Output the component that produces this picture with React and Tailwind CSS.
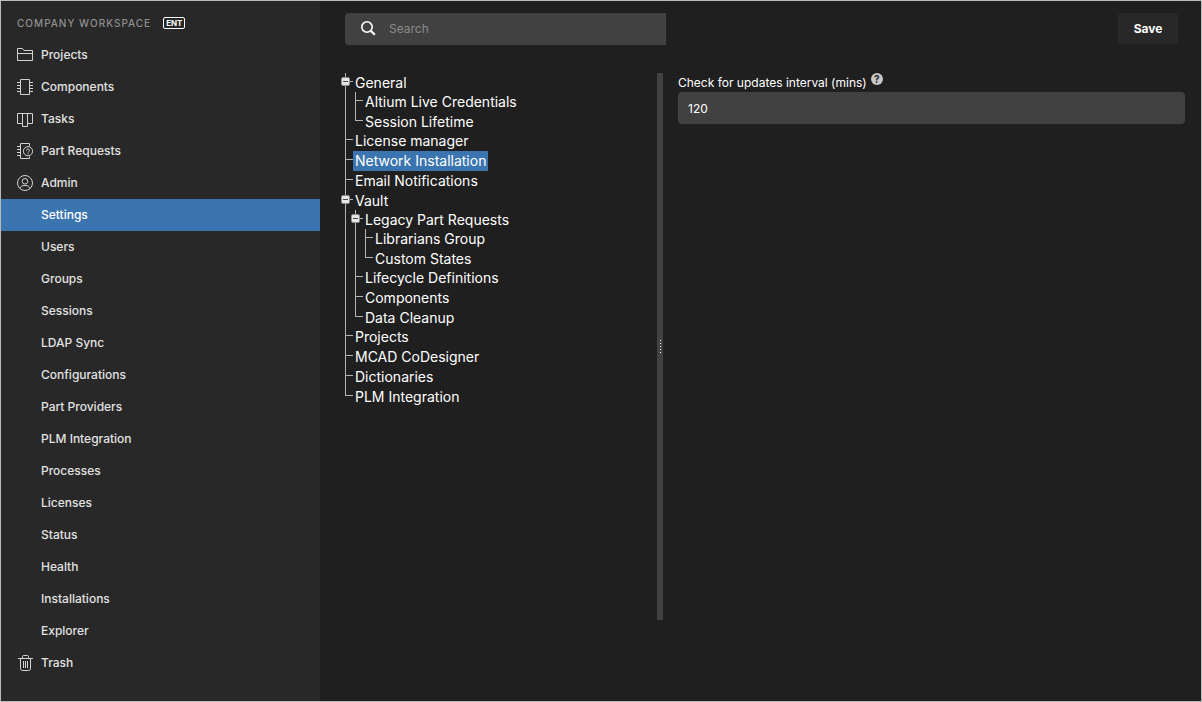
import { useState } from "react";

const adminPages = [
  "Settings",
  "Users",
  "Groups",
  "Sessions",
  "LDAP Sync",
  "Configurations",
  "Part Providers",
  "PLM Integration",
  "Processes",
  "Licenses",
  "Status",
  "Health",
  "Installations",
  "Explorer",
];

const settingsTree = [
  {
    label: "General",
    children: [{ label: "Altium Live Credentials" }, { label: "Session Lifetime" }],
  },
  { label: "License manager" },
  { label: "Network Installation" },
  { label: "Email Notifications" },
  {
    label: "Vault",
    children: [
      {
        label: "Legacy Part Requests",
        children: [{ label: "Librarians Group" }, { label: "Custom States" }],
      },
      { label: "Lifecycle Definitions" },
      { label: "Components" },
      { label: "Data Cleanup" },
    ],
  },
  { label: "Projects" },
  { label: "MCAD CoDesigner" },
  { label: "Dictionaries" },
  { label: "PLM Integration" },
];

function Icon({ children }) {
  return (
    <svg viewBox="0 0 16 16" className="size-4 shrink-0" fill="none" stroke="#d2d2d2" aria-hidden="true">
      {children}
    </svg>
  );
}

const FolderIcon = () => (
  <Icon>
    <path d="M.5 13.500v-12h5l1.500 2h8.500v10zM.5 6.500h15" />
  </Icon>
);

const ChipIcon = () => (
  <Icon>
    <path d="M3.500.5h9v15h-9zM0 3.500h3M0 6.500h3M0 9.500h3M0 12.500h3M13 3.500h3M13 6.500h3M13 9.500h3M13 12.500h3" />
  </Icon>
);

const BoardIcon = () => (
  <Icon>
    <path d="M.5 2.500h15v10h-5v3h-5v-3h-5zM5.500 2.500v10M10.500 2.500v10" />
  </Icon>
);

const PartRequestIcon = () => (
  <Icon>
    <path d="M12.500 3v-2.500h-9v15h9v-2M0 3.500h3M0 6.500h3M0 9.500h3M0 12.500h3" />
    <circle cx="11" cy="8.200" r="4.600" />
    <path d="M9.500 7.500c0-2 3-2 3 0 0 1-1.500 1-1.500 2M11 10.300v1" />
  </Icon>
);

const UserIcon = () => (
  <Icon>
    <circle cx="8" cy="8" r="7.500" />
    <circle cx="8" cy="6.300" r="2.800" />
    <path d="M3 13.500c.5-2.200 2-3 5-3s4.500.8 5 3" />
  </Icon>
);

const TrashIcon = () => (
  <Icon>
    <path d="M1 3.500h15M5.500 3V1.500q0-1 1-1h4q1 0 1 1V3M3.500 4v9.500q0 2 2 2h6q2 0 2-2V4M6.500 6v7M8.500 6v7M10.500 6v7" />
  </Icon>
);

function NavItem({ label, icon, active, onClick }) {
  return (
    <li>
      <a
        href="#"
        onClick={onClick}
        className={`flex h-8 items-center gap-2 pl-4 text-xs font-medium ${
          active ? "bg-[#3a75af] text-white" : "text-[#e2e2e2]"
        }`}
      >
        {icon || <span className="w-4" />}
        {label}
      </a>
    </li>
  );
}

function Sidebar() {
  const [page, setPage] = useState("Settings");

  return (
    <nav className="w-[319px] shrink-0 bg-[#282828]">
      <div className="flex h-[38px] items-center gap-3 pt-1.5 pl-4">
        <span className="text-[10px] font-medium tracking-widest text-[#8f8f8f]">COMPANY WORKSPACE</span>
        <span className="rounded-xs border border-white px-0.5 text-[8px] leading-[10px] font-bold text-white">ENT</span>
      </div>
      <ul>
        <NavItem label="Projects" icon={<FolderIcon />} />
        <NavItem label="Components" icon={<ChipIcon />} />
        <NavItem label="Tasks" icon={<BoardIcon />} />
        <NavItem label="Part Requests" icon={<PartRequestIcon />} />
        <NavItem label="Admin" icon={<UserIcon />} />
        {adminPages.map((name) => (
          <NavItem key={name} label={name} active={name === page} onClick={() => setPage(name)} />
        ))}
        <NavItem label="Trash" icon={<TrashIcon />} />
      </ul>
    </nav>
  );
}

function TreeNode({ node, last, selected, onSelect }) {
  const [open, setOpen] = useState(true);

  return (
    <li className="relative flex">
      {/* connector lines */}
      <div className="flex w-2 shrink-0 flex-col">
        <div className="h-[9px] border-b border-l border-[#b4b4b4]" />
        {!last && <div className="flex-1 border-l border-[#b4b4b4]" />}
      </div>
      {node.children && (
        <button
          aria-label={`Toggle ${node.label}`}
          onClick={() => setOpen(!open)}
          className="absolute top-1 -left-1 flex size-[9px] items-center justify-center rounded-xs border border-[#8e8e8e] bg-[#e6e6e6]"
        >
          <span className="h-px w-[5px] bg-[#444444]" />
        </button>
      )}
      <div>
        <button
          onClick={() => onSelect(node.label)}
          className={`block h-5 px-0.5 text-sm whitespace-nowrap text-white ${
            selected === node.label ? "bg-[#3a75af]" : ""
          }`}
        >
          {node.label}
        </button>
        {node.children && open && (
          <Tree nodes={node.children} className="-my-px pl-0.5" selected={selected} onSelect={onSelect} />
        )}
      </div>
    </li>
  );
}

function Tree({ nodes, className, selected, onSelect }) {
  return (
    <ul className={className}>
      {nodes.map((node, i) => (
        <TreeNode
          key={node.label}
          node={node}
          last={i === nodes.length - 1}
          selected={selected}
          onSelect={onSelect}
        />
      ))}
    </ul>
  );
}

export default function App() {
  const [selected, setSelected] = useState("Network Installation");
  const [interval, setInterval] = useState("120");

  return (
    <div className="flex min-h-screen border border-[#b9bbba] bg-[#1f1f1f] font-['Inter',sans-serif] text-white">
      <Sidebar />
      <main className="flex flex-1 flex-col pt-3 pr-4 pb-[81px] pl-[25px]">
        <div className="flex items-start justify-between pr-[7px]">
          <label className="flex h-8 w-[321px] items-center gap-3 rounded-l bg-[#414142] pl-4">
            <svg viewBox="0 0 16 16" className="size-4 shrink-0" fill="none" stroke="#ffffff" strokeWidth="1.600" aria-hidden="true">
              <circle cx="6" cy="6" r="5.200" />
              <path d="M10 10l3.800 3.800" strokeWidth="2.200" />
            </svg>
            <input
              type="search"
              aria-label="Search"
              placeholder="Search"
              className="w-full text-xs outline-none placeholder:text-[#8a8a8c]"
            />
          </label>
          <button className="h-[31px] w-[60px] rounded bg-[#282829] text-xs font-bold">Save</button>
        </div>

        <div className="mt-7 flex flex-1">
          <div className="w-[312px] shrink-0">
            <Tree nodes={settingsTree} selected={selected} onSelect={setSelected} />
          </div>
          <div className="flex w-1.5 shrink-0 flex-col items-center justify-center gap-0.5 bg-[#414142]">
            {[0, 1, 2, 3, 4].map((dot) => (
              <span key={dot} className="size-px bg-white" />
            ))}
          </div>
          <div className="flex-1 pl-[15px]">
            <div className="flex h-[19px] gap-1">
              <label htmlFor="interval" className="text-xs leading-5">
                Check for updates interval (mins)
              </label>
              <button
                aria-label="Help"
                className="size-3 rounded-full bg-[#c8c8ca] text-[10px] leading-3 font-bold text-[#1f1f1f]"
              >
                ?
              </button>
            </div>
            <input
              id="interval"
              type="text"
              value={interval}
              onChange={(e) => setInterval(e.target.value)}
              className="block h-8 w-full rounded bg-[#414142] px-2.5 text-xs outline-none"
            />
          </div>
        </div>
      </main>
    </div>
  );
}
